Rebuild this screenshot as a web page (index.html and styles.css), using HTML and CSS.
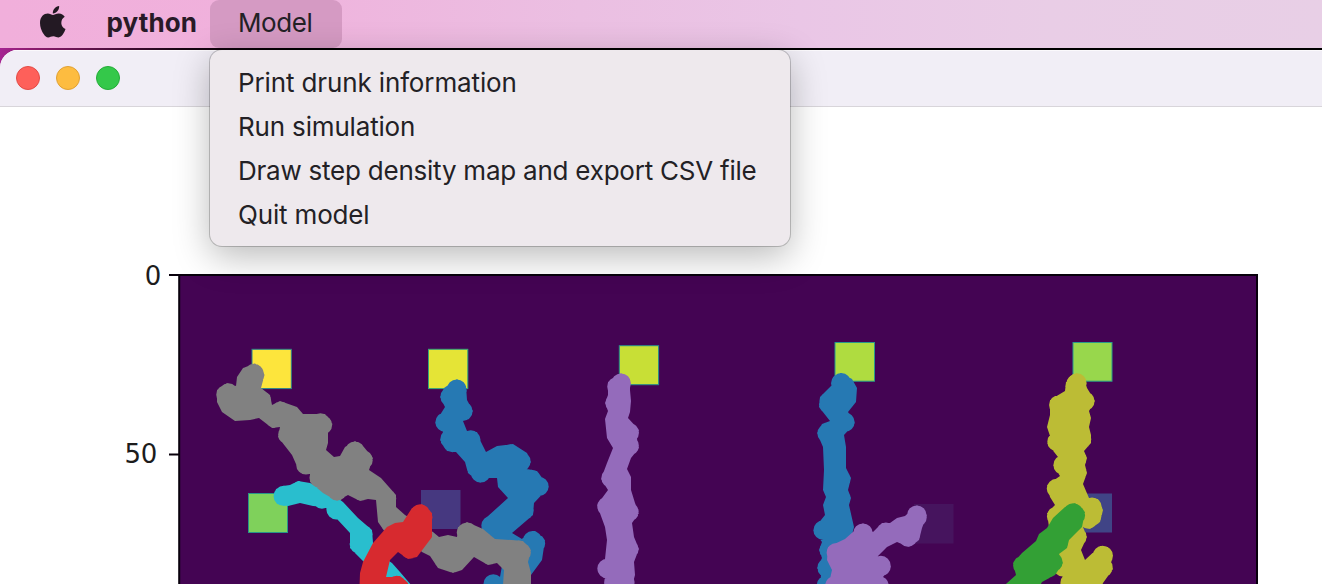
FILE: index.html
```html
<!DOCTYPE html>
<html lang="en">
<head>
<meta charset="utf-8">
<title>python</title>
<link rel="stylesheet" href="styles.css">
</head>
<body>
<header class="menubar">
  <svg class="apple" viewBox="4 32 376 448" preserveAspectRatio="none" aria-label="Apple"><path d="M318.7 268.7c-.2-36.7 16.4-64.4 50-84.8-18.8-26.9-47.2-41.7-84.7-44.6-35.5-2.8-74.3 20.7-88.5 20.7-15 0-49.4-19.7-76.4-19.7C63.3 141.2 4 184.8 4 273.5q0 39.3 14.4 81.2c12.8 36.7 59 126.7 107.2 125.2 25.2-.6 43-17.9 75.8-17.9 31.8 0 48.3 17.9 76.4 17.9 48.6-.7 90.4-82.5 102.6-119.3-65.2-30.7-61.7-90-61.7-91.9zm-56.6-164.2c27.3-32.4 24.8-61.9 24-72.5-24.1 1.4-52 16.4-67.9 34.9-17.5 19.8-27.8 44.3-25.6 71.9 26.1 2 49.9-11.4 69.5-34.3z"/></svg>
  <span class="app-name">python</span>
  <div class="menu-title"><span class="menu-label">Model</span>
    <ul class="dropdown">
      <li><span class="item-print">Print drunk information</span></li>
      <li><span class="item-run">Run simulation</span></li>
      <li><span class="item-draw">Draw step density map and export CSV file</span></li>
      <li><span class="item-quit">Quit model</span></li>
    </ul>
  </div>
</header>
<main class="window">
  <div class="titlebar">
    <span class="light close"></span><span class="light minimise"></span><span class="light zoom"></span>
  </div>
  <svg class="plot" viewBox="0 107 1322 477" width="1322" height="477">
    <rect x="180" y="275" width="1077" height="330" fill="#440453"/>
    <g class="buildings">
      <rect x="252" y="349.3" width="39.3" height="39.3" fill="#fde53c" stroke="#2b858a"/>
      <rect x="428.5" y="349.3" width="39.3" height="39.3" fill="#e5e436" stroke="#35a779"/>
      <rect x="619.3" y="345.7" width="39.3" height="39" fill="#c8df36" stroke="#248b8c"/>
      <rect x="835" y="342.5" width="39.5" height="38.7" fill="#afdc40" stroke="#27998a"/>
      <rect x="1073" y="342.5" width="39" height="38.7" fill="#98d74c" stroke="#289b89"/>
      <rect x="248.5" y="493.5" width="39" height="39" fill="#7fd15b" stroke="#289589"/>
      <rect x="421" y="490" width="39.5" height="39" fill="#463880"/>
      <rect x="914" y="504" width="39.5" height="39.5" fill="#46145e"/>
      <rect x="1073" y="493.5" width="39" height="39" fill="#404486"/>
    </g>
    <g id="trails"></g>
    <path d="M179.2 590V275H1257V590M169 275H179M169 454.5H179" fill="none" stroke="#08000c" stroke-width="2"/>
    <text class="tick" x="161" y="285">0</text>
    <text class="tick" x="157" y="463">50</text>
  </svg>
</main>
<script src="trails.js"></script>
</body>
</html>
```
FILE: styles.css
```css
* { box-sizing: border-box; }
body {
  margin: 0;
  width: 1322px;
  height: 584px;
  overflow: hidden;
  background: linear-gradient(90deg, #a52592, #8e1c70 30px, #190613 180px, #000 300px);
  font-family: Inter, "Liberation Sans", sans-serif;
  color: #232125;
}
.menubar {
  position: relative;
  z-index: 1;
  display: flex;
  height: 48px;
  padding-left: 40px;
  background: linear-gradient(90deg, #f1afdb 0, #f0b1dc 240px, #ebbfe2 580px, #eac6e6 800px, #e9cde6 1050px, #e8cfe6 1322px);
  font-size: 26px;
  line-height: 46px;
  white-space: nowrap;
}
.apple {
  width: 25.5px;
  height: 31.5px;
  margin-top: 6px;
  fill: #231923;
}
.app-name {
  width: 103.5px;
  margin-left: 41px;
  font-weight: 700;
  letter-spacing: 0.1px;
  color: #281a27;
}
.menu-title {
  position: relative;
  width: 132px;
  padding-left: 28px;
  border-radius: 9px;
  background: #d59ac3;
}
.menu-label { letter-spacing: -0.4px; }
.dropdown {
  position: absolute;
  top: 50px;
  left: 0;
  width: 580px;
  height: 196px;
  margin: 0;
  padding: 10px 28px;
  list-style: none;
  border-radius: 12px;
  background: #eee9ed;
  box-shadow: 0 0 0 1px rgba(0, 0, 0, .2), 0 10px 36px rgba(0, 0, 0, .28);
}
.dropdown li { height: 44px; line-height: 46px; }
.item-print { letter-spacing: -0.13px; }
.item-run, .item-quit { letter-spacing: -0.17px; }
.item-draw { letter-spacing: -0.23px; }
.window {
  height: 534px;
  margin-top: 2px;
  overflow: hidden;
  border-top-left-radius: 18px;
  background: #fff;
}
.titlebar {
  display: flex;
  gap: 16px;
  height: 57px;
  padding: 16px;
  border-top: 1px solid #fbf9fc;
  border-bottom: 1px solid #d8d5da;
  background: #f1eef6;
}
.light {
  width: 24px;
  height: 24px;
  margin-top: -1px;
  border: 1px solid;
  border-radius: 50%;
}
.close { background: #fe605a; border-color: #e24b46; }
.minimise { background: #fdbc40; border-color: #e0a033; }
.zoom { background: #34c84a; border-color: #24ac38; }
.plot { display: block; }
.tick {
  font: 26px "DejaVu Sans", sans-serif;
  letter-spacing: -0.3px;
  text-anchor: end;
  fill: #1c1c1c;
}
```
FILE: trails.js
```js
// Outline of each walk, as alternating x, y values, painted in order.
const trails = [
  ["#29bece", [283,486, 290,485, 298,481, 310,483, 327,490, 343,502, 358,518, 372,530, 373,543, 377,553, 392,563, 400,572, 424,600, 385,600, 372,570, 363,561, 350,548, 350,533, 337,519, 325,507, 313,506, 300,503, 288,506, 277,504, 274,497, 276,489]],
  ["#2679b3", [457,379, 466,386, 467,400, 473,411, 469,419, 463,421, 467,431, 477,432, 480,440, 486,452, 497,446, 513,444, 527,453, 531,462, 527,469, 537,471, 549,487, 534,503, 533,515, 512,533, 522,539, 527,533, 535,531, 545,540, 542,560, 531,575, 520,590, 485,590, 487,584, 500,577, 503,560, 500,545, 481,527, 487,517, 508,498, 498,487, 497,478, 488,478, 480,483, 468,473, 465,462, 456,452, 447,451, 440,440, 443,432, 435,423, 445,407, 440,397, 444,388]],
  ["#818181", [255,363.5, 262,368, 264.5,375, 261,388, 270,395, 272,405, 280,401, 297,407, 303,414, 325,414, 332.5,424, 328,433, 328,443, 326,450, 334,457, 340,456, 345,447, 355,441, 363,446, 373,458, 369,470, 381,478, 396,495, 396,507, 405,515, 433,532, 439,537, 448,535, 457,537, 458,527, 467,522, 483,529, 495,539, 512,540, 523,541, 531,550, 528,562, 531,573, 531,600, 502,600, 504,570, 497,563, 488,565, 474,557, 462,570, 453,573, 438,568, 430,556, 422,552, 410,540, 385,532, 378,522, 376,500, 368,499, 360,501, 348,495, 337,501, 323,493, 310,482, 310,474, 300,473, 292,455, 278,437, 280,427, 272,428, 259,418, 250,420, 235,421, 222,412, 217,402, 217,390, 227,383, 236,386, 237,377, 243,368]],
  ["#d72a2f", [422,504, 432,513, 432,537, 417,557, 408,559, 398,552, 390,560, 386,577, 400,576, 408,583, 410,600, 359,600, 360,573, 363,562, 373,543, 387,527, 395,523, 403,522, 412,508]],
  ["#946bbb", [621,373, 630,379, 630,390, 631,401, 630,412, 628,418, 639,430, 637,439, 639,448, 631,458, 627,469, 631,477, 631,490, 635,503, 639,513, 632,523, 634,537, 639,549, 634,562, 635,575, 631,590, 607,590, 606,577, 597,570, 605,559, 607,540, 605,527, 597,505, 608,490, 601,479, 607,463, 613,448, 607,438, 605,419, 608,411, 605,403, 608,395, 608,382]],
  ["#2679b3", [841,373, 852,379, 857,388, 856,402, 848,412, 855,423, 844,435, 846,447, 846,468, 851,478, 848,490, 851,498, 849,505, 854,527, 850,543, 840,592, 819,592, 821,575, 817,568, 822,558, 819,550, 822,542, 813,530, 825,515, 823,505, 826,497, 823,490, 824,470, 823,447, 817,433, 822,424, 830,421, 819,407, 820,397, 832,385, 833,377]],
  ["#946bbb", [917,505, 927,515, 922,528, 919,540, 909,547, 897,542, 887,547, 877,557, 887,558, 891,567, 883,577, 887,592, 827,592, 832,570, 827,560, 828,547, 845,539, 863,523, 873,532, 882,523, 890,523, 897,518, 905,516]],
  ["#bcbc35", [1076,373, 1084,378, 1087,388, 1095,401, 1089,411, 1091,418, 1089,427, 1091,435, 1091,443, 1084,451, 1087,458, 1085,465, 1087,473, 1083,484, 1089,498, 1098,499, 1103,510, 1100,522, 1090,529, 1083,527, 1087,537, 1081,550, 1085,560, 1100,546, 1108,547, 1113,555, 1111,563, 1113,569, 1098,590, 1063,590, 1063,577, 1055,573, 1050,550, 1049,527, 1047,513, 1055,505, 1050,497, 1047,485, 1060,476, 1053,465, 1058,457, 1047,443, 1050,436, 1047,427, 1050,415, 1050,400, 1065,391, 1066,382]],
  ["#33a035", [1075,503, 1085,512, 1082,527, 1069,540, 1067,548, 1059,554, 1063,563, 1055,575, 1042,582, 1032,600, 988,600, 1016,575, 1013,563, 1022,553, 1036,541, 1039,534, 1047,528, 1053,518, 1065,507]]
];

// Each walk is its outline polygon plus round markers set inside the convex corners.
const RADIUS = 9.8;
const INSET = 10.2;

function trail(values) {
  const n = values.length / 2;
  const at = i => [values[2 * ((i + n) % n)], values[2 * ((i + n) % n) + 1]];
  let d = "M" + at(0).join(" ");
  for (let i = 1; i < n; i++) d += "L" + at(i).join(" ");
  d += "Z";
  for (let i = 0; i < n; i++) {
    const [a, b, c] = [at(i - 1), at(i), at(i + 1)];
    const u = [b[0] - a[0], b[1] - a[1]];
    const v = [c[0] - b[0], c[1] - b[1]];
    const lu = Math.hypot(...u), lv = Math.hypot(...v);
    if (u[0] * v[1] - u[1] * v[0] <= 0.04 * lu * lv) continue;
    const t = [u[0] / lu + v[0] / lv, u[1] / lu + v[1] / lv];
    const lt = Math.hypot(...t);
    const x = b[0] - t[1] / lt * INSET, y = b[1] + t[0] / lt * INSET;
    d += `M${x - RADIUS} ${y}a${RADIUS} ${RADIUS} 0 1 1 ${2 * RADIUS} 0a${RADIUS} ${RADIUS} 0 1 1 ${-2 * RADIUS} 0Z`;
  }
  return d;
}

for (const [color, values] of trails) {
  const path = document.createElementNS("http://www.w3.org/2000/svg", "path");
  path.setAttribute("d", trail(values));
  path.setAttribute("fill", color);
  document.getElementById("trails").append(path);
}
```
